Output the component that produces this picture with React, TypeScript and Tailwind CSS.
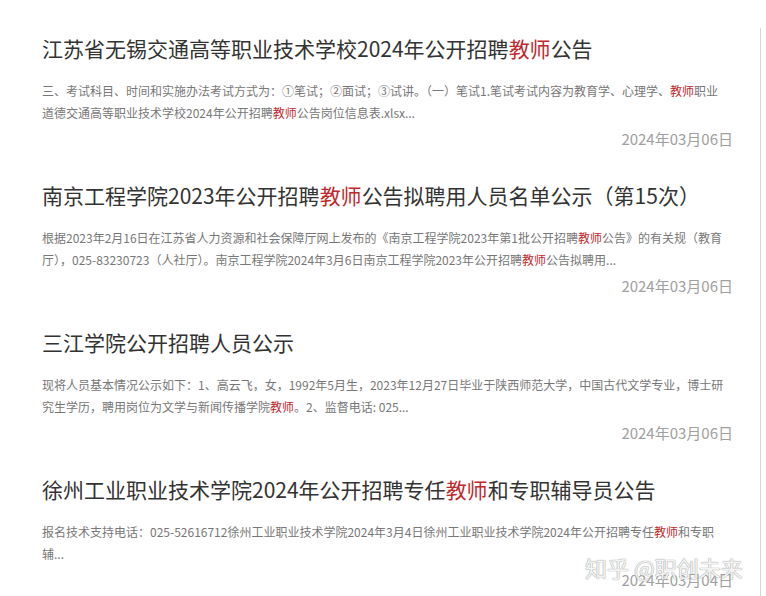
import React from 'react';

type Part = string | { hl: string };

type Item = {
  title: Part[];
  lines: Part[][];
  date: string;
};

const items: Item[] = [
  {
    title: ['江苏省无锡交通高等职业技术学校2024年公开招聘', { hl: '教师' }, '公告'],
    lines: [
      ['三、考试科目、时间和实施办法考试方式为：①笔试；②面试；③试讲。（一）笔试1.笔试考试内容为教育学、心理学、', { hl: '教师' }, '职业'],
      ['道德交通高等职业技术学校2024年公开招聘', { hl: '教师' }, '公告岗位信息表.xlsx...'],
    ],
    date: '2024年03月06日',
  },
  {
    title: ['南京工程学院2023年公开招聘', { hl: '教师' }, '公告拟聘用人员名单公示（第15次）'],
    lines: [
      ['根据2023年2月16日在江苏省人力资源和社会保障厅网上发布的《南京工程学院2023年第1批公开招聘', { hl: '教师' }, '公告》的有关规（教育'],
      ['厅），025-83230723（人社厅）。南京工程学院2024年3月6日南京工程学院2023年公开招聘', { hl: '教师' }, '公告拟聘用...'],
    ],
    date: '2024年03月06日',
  },
  {
    title: ['三江学院公开招聘人员公示'],
    lines: [
      ['现将人员基本情况公示如下：1、高云飞，女，1992年5月生，2023年12月27日毕业于陕西师范大学，中国古代文学专业，博士研'],
      ['究生学历，聘用岗位为文学与新闻传播学院', { hl: '教师' }, '。2、监督电话: 025...'],
    ],
    date: '2024年03月06日',
  },
  {
    title: ['徐州工业职业技术学院2024年公开招聘专任', { hl: '教师' }, '和专职辅导员公告'],
    lines: [
      ['报名技术支持电话：025-52616712徐州工业职业技术学院2024年3月4日徐州工业职业技术学院2024年公开招聘专任', { hl: '教师' }, '和专职'],
      ['辅...'],
    ],
    date: '2024年03月04日',
  },
];

const renderParts = (parts: Part[]) =>
  parts.map((p, i) =>
    typeof p === 'string' ? (
      <span key={i}>{p}</span>
    ) : (
      <span key={i} className="text-[#c0282d]">
        {p.hl}
      </span>
    )
  );

export default function App() {
  return (
    <div
      className="relative w-[766px] h-[596px] overflow-hidden bg-white pt-[28px]"
      style={{ fontFamily: '"Noto Sans CJK SC", "Noto Sans", sans-serif' }}
    >
      <div className="w-[761px] h-full border-r border-[#d6d6d6] pt-[5px] pl-[42px] pr-[27px]">
        {items.map((item, idx) => (
          <div key={idx} className="mb-[30px]">
            <div className="text-[21px] leading-[30px] text-[#333] whitespace-nowrap">
              {renderParts(item.title)}
            </div>
            <div className="mt-[17px] text-[12px] leading-[22px] text-[#777]">
              {item.lines.map((line, li) => (
                <div key={li} className="whitespace-nowrap">
                  {renderParts(line)}
                </div>
              ))}
            </div>
            <div className="mt-[4px] text-right text-[15px] leading-[22px] text-[#a0a0a0]">
              {item.date}
            </div>
          </div>
        ))}
      </div>

      {/* watermark */}
      <div
        className="absolute left-[585px] top-[553px] text-[22px] leading-[28px] text-[#f4f4f4] whitespace-nowrap"
        style={{ textShadow: '0 0 1px #9a9a9a, 0 0 1px #9a9a9a' }}
      >
        知乎 @职创未来
      </div>
    </div>
  );
}
